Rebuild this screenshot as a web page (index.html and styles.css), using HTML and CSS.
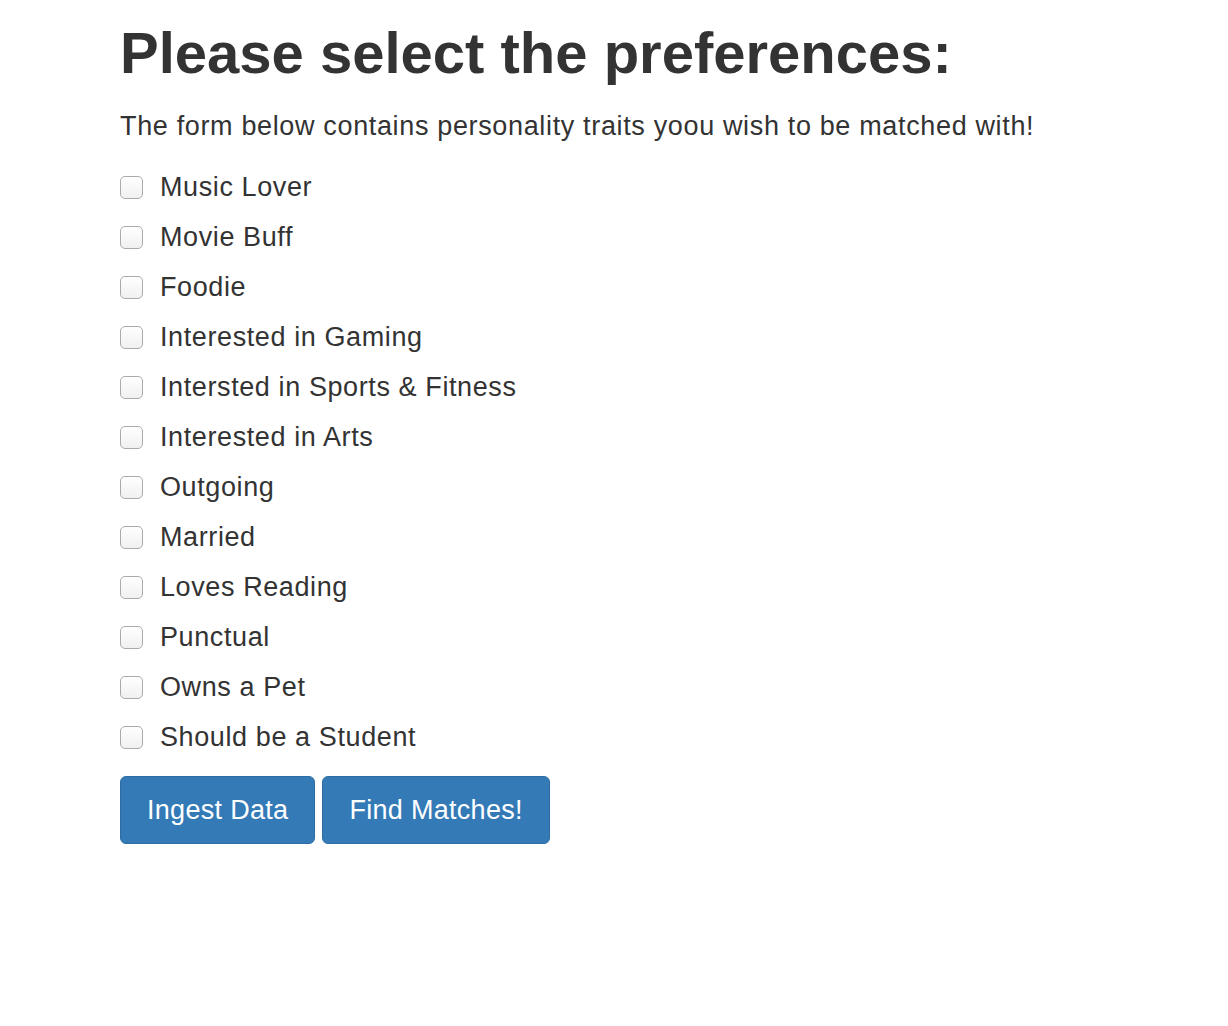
FILE: index.html
```html
<!DOCTYPE html>
<html>
<head>
<meta charset="utf-8">
<link rel="stylesheet" href="styles.css">
</head>
<body>
<div class="container">
  <h1 class="title">Please select the preferences:</h1>
  <p class="lead">The form below contains personality traits yoou wish to be matched with!</p>
  <form class="prefs">
    <label class="check"><input type="checkbox"><span class="box"></span>Music Lover</label>
    <label class="check"><input type="checkbox"><span class="box"></span>Movie Buff</label>
    <label class="check"><input type="checkbox"><span class="box"></span>Foodie</label>
    <label class="check"><input type="checkbox"><span class="box"></span>Interested in Gaming</label>
    <label class="check"><input type="checkbox"><span class="box"></span>Intersted in Sports &amp; Fitness</label>
    <label class="check"><input type="checkbox"><span class="box"></span>Interested in Arts</label>
    <label class="check"><input type="checkbox"><span class="box"></span>Outgoing</label>
    <label class="check"><input type="checkbox"><span class="box"></span>Married</label>
    <label class="check"><input type="checkbox"><span class="box"></span>Loves Reading</label>
    <label class="check"><input type="checkbox"><span class="box"></span>Punctual</label>
    <label class="check"><input type="checkbox"><span class="box"></span>Owns a Pet</label>
    <label class="check"><input type="checkbox"><span class="box"></span>Should be a Student</label>
    <div class="actions">
      <button type="button" class="btn">Ingest Data</button>
      <button type="button" class="btn">Find Matches!</button>
    </div>
  </form>
</div>
</body>
</html>
```

FILE: styles.css
```css
html, body {
  margin: 0;
  padding: 0;
  background: #fff;
}
body {
  font-family: "Liberation Sans", Arial, sans-serif;
  color: #333;
}
.container {
  padding: 0 0 0 120px;
}
.title {
  margin: 0;
  padding-top: 20px;
  font-size: 58px;
  line-height: 66px;
  font-weight: bold;
  letter-spacing: 0;
  color: #333;
}
.lead {
  margin: 21px 0 0 0;
  font-size: 27px;
  letter-spacing: 0.65px;
  line-height: 38px;
}
.prefs {
  display: flex;
  flex-direction: column;
  margin-top: 17px;
}
.check {
  display: flex;
  align-items: center;
  height: 50px;
  font-size: 27px;
  letter-spacing: 0.6px;
  color: #333;
}
.check input {
  display: none;
}
.box {
  width: 21px;
  height: 21px;
  border: 1px solid #aaa;
  border-radius: 5px;
  background: linear-gradient(#fff, #f0f0f0);
  margin-right: 17px;
  flex: none;
}
.actions {
  display: flex;
  gap: 7px;
  margin-top: 14px;
}
.btn {
  font-family: "Liberation Sans", Arial, sans-serif;
  font-size: 27px;
  letter-spacing: 0.3px;
  color: #fff;
  background: #337ab7;
  border: 1px solid #2e6da4;
  border-radius: 6px;
  height: 68px;
  padding: 0 26px;
  cursor: pointer;
}
```
